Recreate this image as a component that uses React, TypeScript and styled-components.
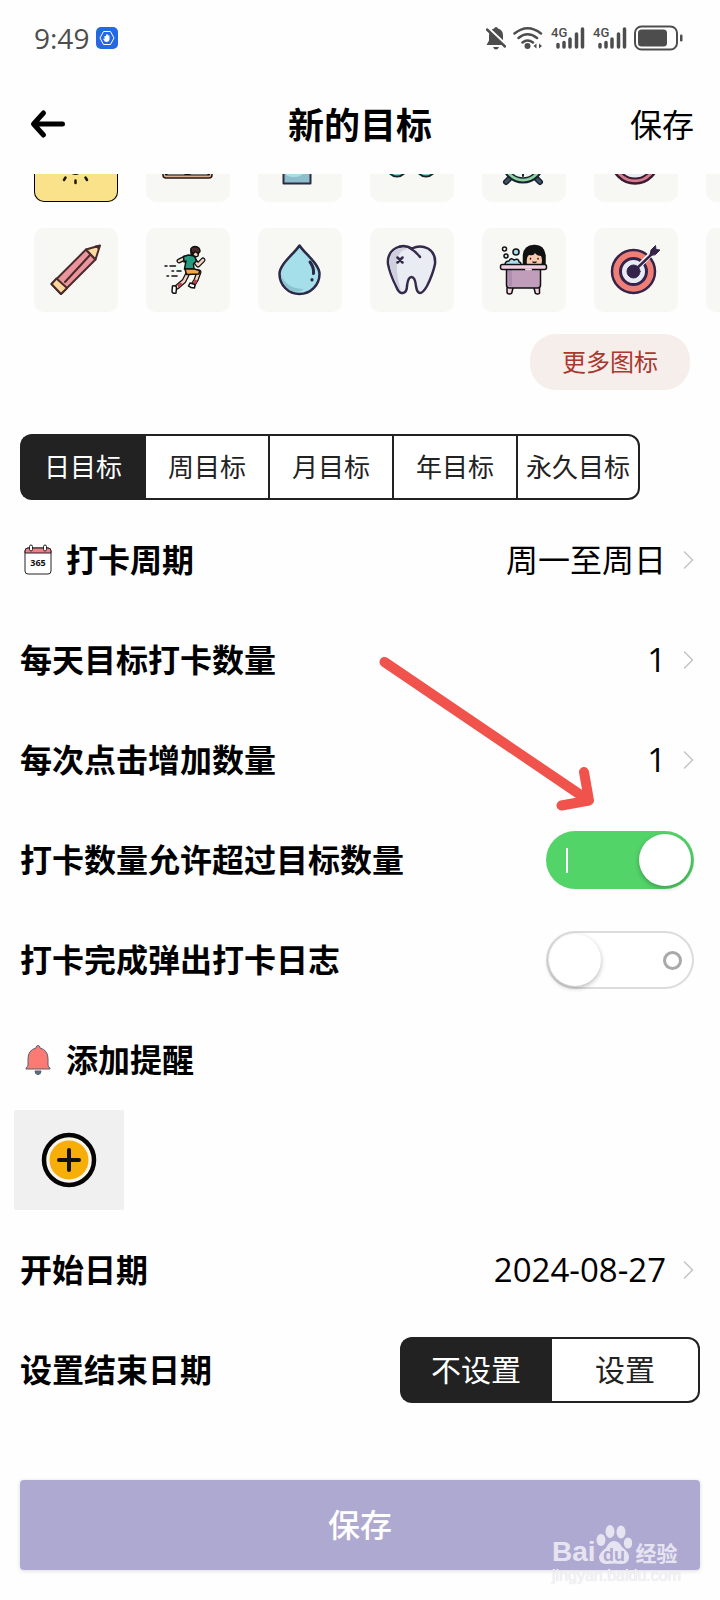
import React, { useState } from 'react';
import styled, { createGlobalStyle } from 'styled-components';

const INK = '#222222';
const CJK = '"Noto Sans CJK SC", sans-serif';
const DIGITS = '"Open Sans", "Noto Sans CJK SC", sans-serif';

const GlobalStyle = createGlobalStyle`
  * { box-sizing: border-box; }
  body { margin: 0; background: #fefefe; color: #000; font-family: ${CJK}; }
  button { margin: 0; padding: 0; border: 0; background: none; color: inherit; font: inherit; cursor: pointer; }
  svg { display: block; flex: none; }
`;

const Page = styled.div`
  display: flex;
  flex-direction: column;
  padding-bottom: 30px;
  overflow-x: hidden;
`;

const StatusBar = styled.div`
  display: flex;
  align-items: center;
  justify-content: space-between;
  height: 76px;
  padding: 0 36px 0 34px;
  color: #4d4d4d;
`;

const StatusGroup = styled.div`
  display: flex;
  align-items: center;
  gap: 7px;
`;

const Clock = styled.time`
  font-family: ${DIGITS};
  font-size: 28px;
  line-height: 32px;
  font-weight: 500;
`;

const Header = styled.header`
  display: grid;
  grid-template-columns: 1fr auto 1fr;
  align-items: center;
  height: 98px;
  padding: 0 26px 4px;
`;

const Title = styled.h1`
  margin: 0;
  font-size: 36px;
  line-height: 48px;
  font-weight: 700;
`;

const BackButton = styled.button`
  justify-self: start;
  padding: 2px 4px 0;
`;

const HeaderAction = styled.button`
  justify-self: end;
  font-size: 32px;
  line-height: 48px;
`;

const IconScroller = styled.div`
  display: flex;
  flex-direction: column;
  justify-content: flex-end;
  gap: 26px;
  height: 138px;
  padding-left: 34px;
  overflow: hidden;
`;

const IconRow = styled.div`
  display: flex;
  gap: 28px;
`;

const IconTile = styled.button<{ $selected?: boolean }>`
  flex: none;
  width: 84px;
  height: 84px;
  border-radius: 10px;
  background: ${p => (p.$selected ? '#fae28a' : '#f7f7f3')};
  box-shadow: ${p => (p.$selected ? 'inset 0 0 0 1px #000' : 'none')};
`;

const MoreButton = styled.button`
  align-self: flex-end;
  width: 160px;
  height: 56px;
  margin: 22px 30px 44px;
  padding-bottom: 2px;
  border-radius: 26px;
  background: #f5eeea;
  color: #a93830;
  font-size: 24px;
  line-height: 32px;
`;

const Segmented = styled.div<{ $inset?: boolean }>`
  display: flex;
  height: 66px;
  margin: 0 ${p => (p.$inset ? '20px' : '0')};
  align-self: ${p => (p.$inset ? 'flex-start' : 'auto')};
`;

const Segment = styled.button<{ $active: boolean; $wide?: boolean }>`
  flex: 0 1 auto;
  width: ${p => (p.$wide ? '150px' : '124px')};
  padding-bottom: ${p => (p.$wide ? '4px' : '2px')};
  border: 2px solid ${INK};
  border-right-width: 0;
  background: ${p => (p.$active ? INK : '#fff')};
  color: ${p => (p.$active ? '#fff' : INK)};
  font-size: ${p => (p.$wide ? '30px' : '26px')};
  line-height: 40px;
  white-space: nowrap;

  &:first-child { border-radius: 12px 0 0 12px; }
  &:last-child { border-right-width: 2px; border-radius: 0 12px 12px 0; }
`;

const Settings = styled.section`
  position: relative;
  margin-top: 10px;
`;

const Row = styled.div`
  display: flex;
  align-items: center;
  justify-content: space-between;
  height: 100px;
  padding: 0 20px;
`;

const RowLabel = styled.label`
  display: flex;
  align-items: center;
  gap: 12px;
  font-size: 32px;
  line-height: 48px;
  font-weight: 700;
`;

const LabelText = styled.span`
  padding-bottom: 4px;
`;

const ValueButton = styled.button`
  display: flex;
  align-items: center;
  gap: 18px;
  margin-right: 6px;
`;

const ValueText = styled.span<{ $numeric?: boolean }>`
  padding-bottom: ${p => (p.$numeric ? '0' : '4px')};
  font-family: ${p => (p.$numeric ? DIGITS : CJK)};
  font-size: ${p => (p.$numeric ? '33px' : '32px')};
  line-height: 48px;
`;

const SwitchBox = styled.span`
  position: relative;
  display: block;
  margin-right: 6px;
`;

const SwitchInput = styled.input`
  position: absolute;
  inset: 0;
  width: 100%;
  height: 100%;
  margin: 0;
  opacity: 0;
  cursor: pointer;
`;

const Track = styled.span<{ $on: boolean }>`
  display: flex;
  flex-direction: ${p => (p.$on ? 'row' : 'row-reverse')};
  align-items: center;
  justify-content: space-between;
  width: 148px;
  height: 58px;
  padding: ${p => (p.$on ? '0 3px 0 20px' : '0 12px 0 3px')};
  border-radius: 29px;
  background: ${p => (p.$on ? '#53d469' : '#fff')};
  box-shadow: ${p => (p.$on ? 'none' : 'inset 0 0 0 2px #dcdcdc')};
`;

const OnMark = styled.span`
  width: 2px;
  height: 25px;
  background: #fff;
`;

const OffMark = styled.span`
  width: 19px;
  height: 19px;
  border: 3px solid #a9a9a9;
  border-radius: 50%;
`;

const Knob = styled.span`
  width: 52px;
  height: 52px;
  border-radius: 50%;
  background: #fff;
  box-shadow: 0 2px 5px rgba(0, 0, 0, 0.28);
`;

const AddReminder = styled.button`
  display: flex;
  align-items: center;
  justify-content: center;
  width: 110px;
  height: 100px;
  margin: 0 14px 10px;
  border-radius: 2px;
  background: #f0f0f0;
`;

const SaveArea = styled.footer`
  position: relative;
  display: flex;
  margin-top: 60px;
  padding: 0 20px;
`;

const SaveButton = styled.button`
  flex: 1;
  height: 90px;
  padding-bottom: 4px;
  border-radius: 4px;
  background: #aea9d1;
  box-shadow: 0 1px 4px rgba(0, 0, 0, 0.14);
  color: #fff;
  font-size: 32px;
  line-height: 48px;
  font-weight: 500;
`;

const Annotation = styled.svg`
  position: absolute;
  top: 144px;
  right: 120px;
  pointer-events: none;
`;

const Watermark = styled.div`
  position: absolute;
  right: 39px;
  bottom: -16px;
  display: flex;
  flex-direction: column;
  pointer-events: none;
  font-family: "Liberation Sans", ${CJK};
`;

const WatermarkBrand = styled.div`
  display: flex;
  align-items: flex-end;
  color: #e7e4f1;
  font-size: 28px;
  line-height: 28px;
  font-weight: 700;
`;

const WatermarkName = styled.span`
  font-family: ${CJK};
  font-size: 21px;
  margin-left: 4px;
`;

const WatermarkSite = styled.span`
  color: #f4f3f6;
  font-size: 16px;
  line-height: 20px;
  text-shadow: 0 0 1px #d4d2dc;
`;

const art = { width: 84, height: 84, viewBox: '0 0 84 84', fill: 'none', strokeLinecap: 'round', strokeLinejoin: 'round' } as const;

const Sun = () => (
  <svg {...art} stroke="#1c1808" strokeWidth="2.500">
    <circle cx="41.500" cy="50" r="6" strokeWidth="2" />
    <path d="M31.500 59.500l-1.500 2.500M41.500 62.500v2.500M51.500 59.500l1.500 2.500" />
  </svg>
);
const Laptop = () => (
  <svg {...art} stroke="#2b1719" strokeWidth="1.500">
    <path d="M17 50h49v7q0 3-3 3H20q-3 0-3-3z" fill="#dcb08c" />
    <path d="M20 56.500h43" stroke="#111" strokeWidth="2" />
    <path d="M22 56h16M45 56h16" stroke="#d3dfe2" strokeWidth="1" />
  </svg>
);
const Glass = () => (
  <svg {...art} stroke="#2b2c43" strokeWidth="2">
    <path d="M25.500 40h27v25.500h-27z" fill="#8ebecb" />
    <path d="M28 50h18q0 9-9 9-6 0-9-2z" fill="#a9dfe3" stroke="none" />
  </svg>
);
const Glasses = () => (
  <svg {...art} stroke="#15252b" strokeWidth="2" fill="#7fd0cf">
    <circle cx="27" cy="49" r="9.500" />
    <circle cx="56" cy="49" r="9.500" />
  </svg>
);
const Alarm = () => (
  <svg {...art} stroke="#17232d">
    <path d="M28 60l-4 4M54 60l4 4" stroke="#17232d" strokeWidth="6" />
    <path d="M28 60l-4 4M54 60l4 4" stroke="#3e5268" strokeWidth="3" />
    <circle cx="41" cy="44" r="20.500" fill="#8fd2a0" strokeWidth="2" />
    <circle cx="41" cy="44" r="16" fill="#eef5f5" strokeWidth="1.500" />
    <path d="M41 56v2" strokeWidth="2" />
  </svg>
);
const Dial = () => (
  <svg {...art} stroke="#3a1c30">
    <circle cx="41" cy="42" r="23.500" fill="#d97a93" strokeWidth="2.500" />
    <circle cx="41" cy="42" r="18.500" fill="#e9ebf4" strokeWidth="2" />
  </svg>
);
const Pencil = () => (
  <svg {...art} stroke="#4b2a2c" strokeWidth="2">
    <path d="M17.500 56L52 21.500 61.500 31.500 27 66z" fill="#e9959b" />
    <path d="M17.500 56l5-5.500L33 60l-6 6z" fill="#fbd69b" />
    <path d="M52 21.500L66 17.500 61.500 31.500z" fill="#fbdba0" />
    <path d="M61 17.500l5-.5-1.500 5z" fill="#4b2a2c" stroke="none" />
    <path d="M31 54L56 27" />
  </svg>
);
const Runner = () => (
  <svg {...art} stroke="#111" strokeWidth="1.500">
    <path d="M19 38h2M24 38h5.500M26 43h1.500M31 43h4M21 48h1.500M26 48h5" />
    <path d="M39 30l-6 3M48 32l4 5 5-5M42 45l-4 8-7 6M47 44l6 0-3 8-3 5" stroke="#111" strokeWidth="5" />
    <path d="M39 30l-6 3M48 32l4 5 5-5M42 45l-4 8-7 6M47 44l6 0-3 8-3 5" stroke="#f3d3bf" strokeWidth="2.500" />
    <path d="M34.500 56l-1.500 1.500M49.500 53l-1 2" stroke="#b9434e" strokeWidth="3" />
    <path d="M26.500 58q4-1 4 2l-.5 5q-4 1-4-2zM44 55l5 1.500-.5 3.500q-4 0-6-2z" fill="#fff" />
    <path d="M37.500 28.500l5-1.500 6 1 2 5-3 3 .5 5h-9.500l1.500-8-2 1z" fill="#259b80" />
    <path d="M39 41h9.500l5 1.500-.5 3.500-12.500.5z" fill="#f6a840" />
    <path d="M45 26v-5l8 1-1 6q-3 2-5-1z" fill="#f6cdb2" />
    <path d="M45 23q-1-4 4-4.500 5 .5 5 5l-2 2-3-2-2 2.500z" fill="#4b292a" />
  </svg>
);
const Drop = () => (
  <svg {...art} stroke="#2c2846" strokeWidth="2.500">
    <path d="M41.500 17.500C36 26 21.500 36 21.500 46a20 20 0 0 0 40 0C61.500 36 47 26 41.500 17.500z" fill="#a5dfe9" />
    <path d="M23 46q5 15 23 15-6 5-14 1.500Q24 57 23 46z" fill="#8bc3cf" stroke="none" />
    <path d="M52 34q4 5 3.500 11.500M54 51.500v.5" strokeWidth="3" />
  </svg>
);
const Tooth = () => (
  <svg {...art} stroke="#352a4c" strokeWidth="2.500">
    <path d="M42 20.500Q34 16 26 20q-9 5-8 16 2 10 8 22 3 8 7 7t4-7q1-9 4.500-9t4.500 9q1 7 4 7t7-7q6-12 8-22 1-11-7-15.500-8-4-16 0z" fill="#eaecf3" />
    <path d="M38 21q-10 1-11 13t4 29q-5-5-10-20-4-15 4-21 6-4 13-1z" fill="#cfcfdd" stroke="none" />
    <path d="M39 19.500q7 4 11 9.500M27.500 29.500l5 5M32.500 29.500l-5 5" />
  </svg>
);
const Bath = () => (
  <svg {...art} stroke="#111" strokeWidth="1.500">
    <path d="M25 60v4q0 2 2.500 2t2.500-2l1-4M52 60l1 4q0 2 2.500 2t2-2v-4" fill="#f6d5e5" />
    <path d="M41.500 37V27q1-9 10.500-9.500T63 27v10z" fill="#111" />
    <path d="M45 37q-1-8 2-10 5 1 6-2 2 3 6 3 2 4 0 9z" fill="#f7c9ad" stroke="none" />
    <path d="M48.500 30.500v.5M56 30.500v.5M51 34q1.500 1 3 0" strokeWidth="1.500" />
    <path d="M23 37q0-4 4-4 2-4 5-1 5-2 5 2 2 0 2 3z" fill="#a9def0" />
    <circle cx="22.500" cy="21" r="2" fill="#fff" />
    <circle cx="24" cy="28" r="2" fill="#c7e9f5" />
    <circle cx="34" cy="24" r="3" fill="#a9def0" />
    <path d="M24.500 41h34v16q0 3-3 3h-28q-3 0-3-3z" fill="#bf9dbb" />
    <path d="M26 42h4v16h-3z" fill="#af8db3" stroke="none" />
    <rect x="18.500" y="36.500" width="46" height="5" rx="2" fill="#f3cfe3" />
    <path d="M44 41.500h5" stroke="#f3cfe3" strokeWidth="2" />
  </svg>
);
const Target = () => (
  <svg {...art} stroke="#35234a">
    <circle cx="39.500" cy="43.500" r="21.500" fill="#ee7f76" strokeWidth="2.500" />
    <circle cx="39.500" cy="43.500" r="13" fill="#e9ebf4" strokeWidth="3" />
    <circle cx="39.500" cy="43.500" r="6.500" fill="#35234a" />
    <path d="M48 35l10-10" stroke="#f7f7f3" strokeWidth="5" />
    <path d="M40 43l19-18" strokeWidth="2.500" />
    <path d="M56 27l1-5 4.500-4.500.5 4 4 .5-4.500 4.500z" fill="#35234a" strokeWidth="1" />
  </svg>
);

const topIcons = [['日出', Sun], ['电脑', Laptop], ['水杯', Glass], ['眼镜', Glasses], ['闹钟', Alarm], ['时钟', Dial], ['更多一', null]] as const;
const bottomIcons = [['铅笔', Pencil], ['跑步', Runner], ['喝水', Drop], ['牙齿', Tooth], ['泡澡', Bath], ['靶心', Target], ['更多二', null]] as const;

const Chevron = () => (
  <svg width="10" height="18" viewBox="0 0 10 18" fill="none" stroke="#c4c4c4" strokeWidth="1.500">
    <path d="M0 .5L8.500 9 0 17.500" />
  </svg>
);

const Calendar = () => (
  <svg width="34" height="34" viewBox="0 0 34 34" fill="none" stroke="#222" strokeWidth="1">
    <rect x="5" y="5" width="26" height="26" rx="3" fill="#fff" />
    <path d="M5 10V8q0-3 3-3h20q3 0 3 3v2z" fill="#ee7f86" />
    <rect x="9.500" y="2" width="3" height="6" rx="1.500" fill="#fff" />
    <rect x="23.500" y="2" width="3" height="6" rx="1.500" fill="#fff" />
    <text x="18" y="23" textAnchor="middle" fontFamily="Open Sans" fontWeight="700" fontSize="9" fill="#111" stroke="none">365</text>
  </svg>
);

const Bell = () => (
  <svg width="34" height="34" viewBox="0 0 34 34" stroke="#56606b" strokeWidth="1">
    <path d="M15 28h6q0 3.500-3 3.500T15 28z" fill="#56707c" />
    <path d="M16 5q0-2.500 2-2.500T20 5q8 2 8 11v6q0 2 2 3v1H6v-1q2-1 2-3v-6q0-9 8-11z" fill="#fb7b74" />
  </svg>
);

const Signal = () => (
  <svg width="35" height="36" viewBox="-1 -6 35 36" fill="none" stroke="#4d4d4d" strokeWidth="3.500" strokeLinecap="round">
    <path d="M7 18.500V21M13 16.500V21M19 13V21M25.500 8V21M31.500 3V21" />
    <text x="0" y="11" fontFamily="Roboto" fontWeight="500" fontSize="13" fill="#4d4d4d" stroke="none">4G</text>
  </svg>
);

function Switch({ id, initial }: { id: string; initial: boolean }) {
  const [on, setOn] = useState(initial);
  return (
    <SwitchBox>
      <SwitchInput id={id} type="checkbox" role="switch" checked={on} onChange={e => setOn(e.target.checked)} />
      <Track $on={on}>
        {on ? <OnMark /> : <OffMark />}
        <Knob />
      </Track>
    </SwitchBox>
  );
}

function Segments({ options, wide, inset, id }: { options: string[]; wide?: boolean; inset?: boolean; id?: string }) {
  const [active, setActive] = useState(0);
  return (
    <Segmented $inset={inset} role="group">
      {options.map((label, i) => (
        <Segment key={label} id={i === 0 ? id : undefined} $active={i === active} $wide={wide} aria-pressed={i === active} onClick={() => setActive(i)}>
          {label}
        </Segment>
      ))}
    </Segmented>
  );
}

function Label({ target, icon, text }: { target: string; icon?: React.ReactNode; text: string }) {
  return (
    <RowLabel htmlFor={target}>{icon}<LabelText>{text}</LabelText></RowLabel>
  );
}

function ValueRow({ id, label, value, numeric, icon }: { id: string; label: string; value: string; numeric?: boolean; icon?: React.ReactNode }) {
  return (
    <Row>
      <Label target={id} icon={icon} text={label} />
      <ValueButton id={id}>
        <ValueText $numeric={numeric}>{value}</ValueText>
        <Chevron />
      </ValueButton>
    </Row>
  );
}

export default function App() {
  const [selected, setSelected] = useState('日出');
  return (
    <Page>
      <GlobalStyle />
      <StatusBar>
        <StatusGroup>
          <Clock>9:49</Clock>
          <svg width="22" height="22" viewBox="0 0 22 22">
            <rect width="22" height="22" rx="5" fill="#2468e4" />
            <path d="M7.500 4.500h7l3.500 6.500-3.500 6.500h-7L4 11z" fill="none" stroke="#fff" strokeWidth="1" />
            <path d="M7 11.500l1.500.5V9H10V7.500h2V8.500h1.500v4.500q-1 2-3 2T7 11.500z" fill="#fff" />
          </svg>
        </StatusGroup>
        <StatusGroup>
          <svg width="20" height="24" viewBox="0 0 20 24" fill="#4d4d4d">
            <path d="M10 1q1.500 0 2 1.500 5 1.500 5 7v5l2.500 4.500H.5L3 14.500v-5q0-5.500 5-7Q8.500 1 10 1zM7 21h6q-1 2.500-3 2.500T7 21z" />
            <path d="M1.500 1.500L21 20" stroke="#fefefe" strokeWidth="3" />
            <path d="M1 3.500l18 17" stroke="#4d4d4d" strokeWidth="2.500" strokeLinecap="round" />
          </svg>
          <svg width="30" height="24" viewBox="0 0 30 24" fill="none" stroke="#4d4d4d" strokeWidth="2.500" strokeLinecap="round">
            <path d="M1.500 7.500Q14.500-3 28 7.500M5.500 12q9-7.500 18.500 0M9.500 16.500q5-4 10.500 0" />
            <circle cx="14.500" cy="20" r="3" fill="#4d4d4d" stroke="none" />
            <path d="M23.500 17.500v5l-3-2.500zM26 17.500v5l3-2.500z" fill="#4d4d4d" stroke="none" />
          </svg>
          <Signal />
          <Signal />
          <svg width="50" height="26" viewBox="0 0 50 26" fill="none">
            <rect x="1" y="1.500" width="42" height="23" rx="6.500" stroke="#4d4d4d" strokeWidth="2" />
            <rect x="4" y="4.500" width="29" height="17" rx="3.500" fill="#4d4d4d" />
            <rect x="46" y="9.500" width="2.500" height="7" rx="1.200" fill="#4d4d4d" />
          </svg>
        </StatusGroup>
      </StatusBar>

      <Header>
        <BackButton aria-label="返回">
          <svg width="36" height="30" viewBox="0 0 36 30" fill="none" stroke="#000" strokeWidth="5" strokeLinecap="round" strokeLinejoin="round">
            <path d="M13.500 4L3.500 15l10 11M4 15h28.500" />
          </svg>
        </BackButton>
        <Title>新的目标</Title>
        <HeaderAction>保存</HeaderAction>
      </Header>

      <IconScroller>
        {[topIcons, bottomIcons].map((row, r) => (
          <IconRow key={r}>
            {row.map(([name, Art]) => (
              <IconTile key={name} aria-label={name} $selected={selected === name} onClick={() => setSelected(name)}>
                {Art && <Art />}
              </IconTile>
            ))}
          </IconRow>
        ))}
      </IconScroller>
      <MoreButton>更多图标</MoreButton>

      <Segments inset options={['日目标', '周目标', '月目标', '年目标', '永久目标']} />

      <Settings>
        <ValueRow id="cycle" icon={<Calendar />} label="打卡周期" value="周一至周日" />
        <ValueRow id="daily" label="每天目标打卡数量" value="1" numeric />
        <ValueRow id="step" label="每次点击增加数量" value="1" numeric />
        <Row>
          <Label target="exceed" text="打卡数量允许超过目标数量" />
          <Switch id="exceed" initial />
        </Row>
        <Row>
          <Label target="journal" text="打卡完成弹出打卡日志" />
          <Switch id="journal" initial={false} />
        </Row>
        <Row>
          <Label target="reminder" icon={<Bell />} text="添加提醒" />
        </Row>
        <AddReminder id="reminder" aria-label="添加提醒">
          <svg width="56" height="56" viewBox="0 0 56 56">
            <circle cx="28" cy="28" r="25" fill="#faf5ea" stroke="#050505" strokeWidth="4.500" />
            <circle cx="28" cy="28" r="19.500" fill="#f7ae08" />
            <path d="M18 28h20M28 18v20" stroke="#111" strokeWidth="4" strokeLinecap="round" />
          </svg>
        </AddReminder>
        <ValueRow id="start" label="开始日期" value="2024-08-27" numeric />
        <Row>
          <Label target="end" text="设置结束日期" />
          <Segments id="end" wide options={['不设置', '设置']} />
        </Row>
        <Annotation width="224" height="160" viewBox="0 0 224 160" fill="none" stroke="#f0524c" strokeWidth="10" strokeLinecap="round" strokeLinejoin="round">
          <path d="M8.500 8L212 146M208 118l5 28.500-27.500 5" />
        </Annotation>
      </Settings>

      <SaveArea>
        <SaveButton>保存</SaveButton>
        <Watermark aria-hidden="true">
          <WatermarkBrand>
            <span>Bai</span>
            <svg width="36" height="42" viewBox="0 0 36 42" fill="#e7e4f1">
              <ellipse cx="5" cy="16" rx="4.500" ry="6" />
              <ellipse cx="14" cy="7.500" rx="4.500" ry="6.500" />
              <ellipse cx="25" cy="8" rx="4.500" ry="6.500" />
              <ellipse cx="32" cy="19" rx="4.200" ry="5.500" />
              <path d="M18 17q5 0 8 6 8 6 7 11-1 6-8 6-7-1-14 0-7 0-8-6 0-5 7-10 3-7 8-7z" />
              <text x="18" y="37" textAnchor="middle" fontFamily="Liberation Sans" fontWeight="700" fontSize="18" fill="#aea9d1">du</text>
            </svg>
            <WatermarkName>经验</WatermarkName>
          </WatermarkBrand>
          <WatermarkSite>jingyan.baidu.com</WatermarkSite>
        </Watermark>
      </SaveArea>
    </Page>
  );
}
